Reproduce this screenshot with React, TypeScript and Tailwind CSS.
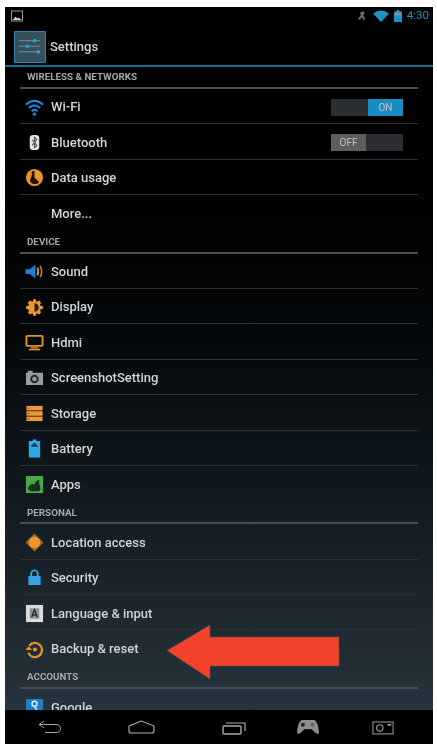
import type { ReactNode } from "react";

function Icon({ children }: { children: ReactNode }) {
    return (
        <svg viewBox="0 0 20 20" className="h-[19px] w-[19px] shrink-0">
            {children}
        </svg>
    );
}

const wifi = (
    <Icon>
        <path d="M1 7 Q10 -1 19 7" fill="none" stroke="#1f86d6" strokeWidth="2.2" />
        <path d="M4 10.5 Q10 5 16 10.5" fill="none" stroke="#1f86d6" strokeWidth="2.2" />
        <path d="M7 14 Q10 11 13 14" fill="none" stroke="#1f86d6" strokeWidth="2.2" />
        <circle cx="10" cy="17" r="1.8" fill="#1f86d6" />
    </Icon>
);

const bluetooth = (
    <Icon>
        <rect x="5" y="2" width="10" height="16" rx="3.5" fill="#e4e4e4" />
        <path d="M7.5 7 L12.5 13 L10 15.5 V4.5 L12.5 7 L7.5 13" fill="none" stroke="#555" strokeWidth="1.2" />
    </Icon>
);

const dataUsage = (
    <Icon>
        <circle cx="10" cy="10" r="9" fill="#e8952e" />
        <path d="M10 3 V10 L15 15 A7 7 0 0 1 7 16 Q4 13 6 11 Q8 8 7 4 Q8 3 10 3Z" fill="#1a1209" />
    </Icon>
);

const sound = (
    <Icon>
        <path d="M0.5 7.5 H5 L11 3 V17 L5 12.5 H0.5Z" fill="#1f7fd8" />
        <path d="M13 6 Q15 10 13 14" fill="none" stroke="#d99a2f" strokeWidth="1.8" />
        <path d="M16 4 Q19 10 16 16" fill="none" stroke="#b9882c" strokeWidth="1.6" />
    </Icon>
);

const display = (
    <Icon>
        <path d="M9 1 H11 L12 4 L15 2.6 L17 5 L15.5 7.5 L19 9 V11 L15.5 12.5 L17 15 L15 17.4 L12 16 L11 19 H9 L8 16 L5 17.4 L3 15 L4.5 12.5 L1 11 V9 L4.5 7.5 L3 5 L5 2.6 L8 4Z" fill="#ec9a2c" />
        <path d="M10 5.5 A4.5 4.5 0 0 1 10 14.5Z" fill="#2a1c0a" />
    </Icon>
);

const hdmi = (
    <Icon>
        <rect x="1.5" y="3" width="17" height="10.5" rx="1" fill="none" stroke="#e0932b" strokeWidth="2" />
        <rect x="6" y="15" width="8" height="1.2" fill="#e0932b" />
        <rect x="4" y="16.5" width="12" height="1.8" fill="#e0932b" />
    </Icon>
);

const camera = (
    <Icon>
        <path d="M1 5 H3 V3 H8 V5 H19 V18 H1Z" fill="#9a9da0" />
        <circle cx="10" cy="11.5" r="4.5" fill="#23292e" />
        <circle cx="10" cy="11.5" r="2.4" fill="#9a9da0" />
    </Icon>
);

const storage = (
    <Icon>
        <rect x="1.5" y="2" width="17" height="4.8" fill="#ec9a34" />
        <rect x="1.5" y="7.6" width="17" height="4.8" fill="#ec9a34" />
        <rect x="1.5" y="13.2" width="17" height="4.8" fill="#ec9a34" />
        <rect x="3" y="3.8" width="1.5" height="1.2" fill="#7a4d16" />
        <rect x="3" y="9.4" width="1.5" height="1.2" fill="#7a4d16" />
        <rect x="3" y="15" width="1.5" height="1.2" fill="#7a4d16" />
    </Icon>
);

const battery = (
    <Icon>
        <path d="M8 0.5 H12 V2 H16 V19.5 H4 V2 H8Z" fill="#2fa6e6" />
        <path d="M6.5 7 L10 3.8 L13.5 7 V8.2 H6.5Z" fill="#123c55" />
    </Icon>
);

const apps = (
    <Icon>
        <rect x="1" y="1" width="18" height="18" fill="#48a84a" />
        <path d="M3 14 Q6 8 10 10 Q11 6 15 5 Q14 9 16 12 Q17 15 15 17 H6 Q4 16 3 14Z" fill="#1a2e1c" />
    </Icon>
);

const location = (
    <Icon>
        <path d="M10 0.5 L19.5 10 L10 19.5 L0.5 10Z" fill="#9c6a2c" />
        <circle cx="10" cy="10" r="6" fill="#f09426" />
    </Icon>
);

const security = (
    <Icon>
        <path d="M6.5 9 V6 A3.5 3.5 0 0 1 13.5 6 V9" fill="none" stroke="#35a3e4" strokeWidth="2" />
        <rect x="3.5" y="8.5" width="13" height="9.5" rx="1" fill="#35a3e4" />
    </Icon>
);

const language = (
    <Icon>
        <rect x="1" y="1" width="18" height="18" fill="#dcdcdc" />
        <rect x="5" y="4.5" width="10" height="11" fill="#8f9396" />
        <path d="M7 14 L10 6 L13 14 M8.2 11.5 H11.8" fill="none" stroke="#2a2e32" strokeWidth="1.5" />
    </Icon>
);

const backup = (
    <Icon>
        <path d="M4.5 6 A7.5 7.5 0 1 1 3.5 13.5" fill="none" stroke="#e8912a" strokeWidth="2.4" />
        <path d="M0.5 10.5 H7.5 L4 6.5Z" fill="#e8912a" />
        <circle cx="10.5" cy="10" r="2.2" fill="#e8912a" />
    </Icon>
);

const google = (
    <Icon>
        <rect x="1" y="1" width="18" height="18" fill="#1d7fc4" />
        <circle cx="10" cy="6" r="2.6" fill="none" stroke="#dfeaf2" strokeWidth="1.6" />
        <path d="M10 9 Q14 12 10 15 Q7 15 7 13" fill="none" stroke="#dfeaf2" strokeWidth="1.6" />
    </Icon>
);

type Item = { label: string; icon?: ReactNode; toggle?: "on" | "off"; last?: boolean };

const sections: { title: string; headerClass: string; items: Item[] }[] = [
    {
        title: "WIRELESS & NETWORKS",
        headerClass: "h-[22px]",
        items: [
            { label: "Wi-Fi", icon: wifi, toggle: "on" },
            { label: "Bluetooth", icon: bluetooth, toggle: "off" },
            { label: "Data usage", icon: dataUsage },
            { label: "More...", last: true },
        ],
    },
    {
        title: "DEVICE",
        headerClass: "h-[23px]",
        items: [
            { label: "Sound", icon: sound },
            { label: "Display", icon: display },
            { label: "Hdmi", icon: hdmi },
            { label: "ScreenshotSetting", icon: camera },
            { label: "Storage", icon: storage },
            { label: "Battery", icon: battery },
            { label: "Apps", icon: apps, last: true },
        ],
    },
    {
        title: "PERSONAL",
        headerClass: "h-[23px]",
        items: [
            { label: "Location access", icon: location },
            { label: "Security", icon: security },
            { label: "Language & input", icon: language },
            { label: "Backup & reset", icon: backup, last: true },
        ],
    },
    {
        title: "ACCOUNTS",
        headerClass: "h-[23px]",
        items: [{ label: "Google", icon: google, last: true }],
    },
];

function Toggle({ state }: { state: "on" | "off" }) {
    return (
        <div className="flex h-[17px] w-[72px] bg-[#2c2f31] text-[10px] text-[#b9c4ca]">
            {state === "on" ? (
                <div className="ml-auto flex w-[35px] items-center justify-center bg-[#1a8cc4]">ON</div>
            ) : (
                <div className="flex w-[35px] items-center justify-center bg-[#5c5e60]">OFF</div>
            )}
        </div>
    );
}

function Row({ item }: { item: Item }) {
    return (
        <div className={`flex h-[35.4px] shrink-0 items-center pt-[2px] ${item.last ? "" : "border-b border-[#2b3034]"}`}>
            <div className="flex w-[31px] shrink-0 items-center pl-[5px]">{item.icon}</div>
            <span className="flex-1 text-[13px] font-medium text-[#d2d4d5]">{item.label}</span>
            {item.toggle && (
                <div className="mr-[15px]">
                    <Toggle state={item.toggle} />
                </div>
            )}
        </div>
    );
}

function Section({ title, headerClass, items }: { title: string; headerClass: string; items: Item[] }) {
    return (
        <div className="flex shrink-0 flex-col">
            <div className={`flex items-end border-b-2 border-[#4a4e51] pb-[2px] pl-[7px] text-[9.8px] font-bold text-[#a5a8aa] ${headerClass}`}>
                {title}
            </div>
            {items.map((item) => (
                <Row key={item.label} item={item} />
            ))}
        </div>
    );
}

export default function App() {
    return (
        <div className="h-[748px] w-[437px] overflow-hidden bg-white pb-[4px] pl-[5px] pr-[4px] pt-[7px] font-['Roboto',sans-serif]">
            <div className="relative flex h-full flex-col bg-black blur-[0.5px]">
                <div className="flex h-[21px] shrink-0 items-center justify-between pb-[3px] pl-[6px] pr-[4px]">
                    <svg viewBox="0 0 12 12" className="h-3 w-3">
                        <rect x="0.5" y="1" width="11" height="10" fill="none" stroke="#9a9a9a" strokeWidth="1" />
                        <path d="M1.5 10 L4.5 6.5 L6.5 8.5 L8 7.5 L10.5 10Z" fill="#c8c8c8" />
                    </svg>
                    <div className="flex items-center gap-[5px]">
                        <svg viewBox="0 0 12 12" className="h-3 w-3">
                            <path d="M7 1 L9 3 L7 5 L9 8 L8 11 L6 7 L3 10 L2 9 L5 5 L4 3Z" fill="#6f6f6f" />
                        </svg>
                        <svg viewBox="0 0 16 12" className="h-3 w-4">
                            <path d="M0 3.5 Q8 -2.5 16 3.5 L8 12Z" fill="#1b93c7" />
                        </svg>
                        <svg viewBox="0 0 8 12" className="h-3 w-2">
                            <path d="M2.5 0 H5.5 V1.5 H8 V12 H0 V1.5 H2.5Z" fill="#1b93c7" />
                            <rect x="1" y="2.5" width="6" height="3" fill="#8a8f92" />
                        </svg>
                        <span className="text-[11.5px] text-[#1b93c7]">4:30</span>
                    </div>
                </div>
                <div className="flex h-[39px] shrink-0 items-center gap-[4px] border-b-2 border-[#14708f] pl-[9px]">
                    <div className="flex h-[32px] w-[32px] flex-col justify-center rounded-[1px] border border-[#2f86ad] bg-[#35515e] px-[3px]">
                        <svg viewBox="0 0 26 20" className="w-full">
                            <path d="M1 4 H24 M1 10 H24 M1 16 H24" stroke="#7d929c" strokeWidth="1" />
                            <circle cx="18" cy="4" r="2" fill="#2f9fd4" />
                            <circle cx="10" cy="10" r="2" fill="#2f9fd4" />
                            <circle cx="22" cy="16" r="2" fill="#2f9fd4" />
                        </svg>
                    </div>
                    <span className="text-[13px] font-medium text-[#d0d2d3]">Settings</span>
                </div>
                <div className="relative min-h-0 flex-1 overflow-hidden bg-gradient-to-b from-black to-[#27343d] pl-[15px] pr-[15px]">
                    <div className="flex flex-col">
                        {sections.map((section) => (
                            <Section key={section.title} title={section.title} headerClass={section.headerClass} items={section.items} />
                        ))}
                    </div>
                </div>
                <div className="flex h-[34px] shrink-0 items-center bg-black pl-[33px]">
                    <svg viewBox="0 0 23 14" className="h-[14px] w-[23px]">
                        <path d="M1 4.5 H18 Q22.5 4.5 22.5 8.5 Q22.5 12.5 18 12.5 H7 M6 1 L1 4.5 L6 8" fill="none" stroke="#a0a0a0" strokeWidth="1" />
                    </svg>
                    <svg viewBox="0 0 27 14" className="ml-[67px] h-[14px] w-[27px]">
                        <path d="M1 6 L13.5 1 L26 6 V11 Q26 13 24 13 H3 Q1 13 1 11Z" fill="none" stroke="#b0b0b0" strokeWidth="1.1" />
                    </svg>
                    <svg viewBox="0 0 24 15" className="ml-[67px] h-[15px] w-[24px]">
                        <rect x="1" y="6" width="18" height="8" rx="1" fill="none" stroke="#a8a8a8" strokeWidth="1.4" />
                        <path d="M4 3 H23 V11" fill="none" stroke="#a8a8a8" strokeWidth="1.2" />
                    </svg>
                    <svg viewBox="0 0 26 17" className="ml-[50px] h-[16px] w-[24px]">
                        <path d="M6 1 H20 Q24 3 25 15 Q23 17 20 14 L17 11 H9 L6 14 Q3 17 1 15 Q2 3 6 1Z" fill="#8d8d8d" />
                        <circle cx="7.5" cy="6" r="2.2" fill="#222" />
                        <circle cx="18" cy="6" r="2.2" fill="#666" />
                    </svg>
                    <svg viewBox="0 0 24 16" className="ml-[52px] h-[15px] w-[22px]">
                        <rect x="1" y="2" width="22" height="13" fill="none" stroke="#8f8f8f" strokeWidth="1.2" />
                        <circle cx="8.5" cy="8.5" r="3.5" fill="none" stroke="#a0a0a0" strokeWidth="1.2" />
                        <rect x="17" y="4" width="4" height="2" fill="#a0a0a0" />
                    </svg>
                </div>
                <svg viewBox="0 0 173 55" className="absolute left-[162px] top-[618px] h-[55px] w-[173px]">
                    <path d="M0 25.5 L43 0 V12 H172 V41 H43 V54 Z" fill="#f2422b" stroke="#5f4a48" strokeWidth="0.6" />
                </svg>
            </div>
        </div>
    );
}
